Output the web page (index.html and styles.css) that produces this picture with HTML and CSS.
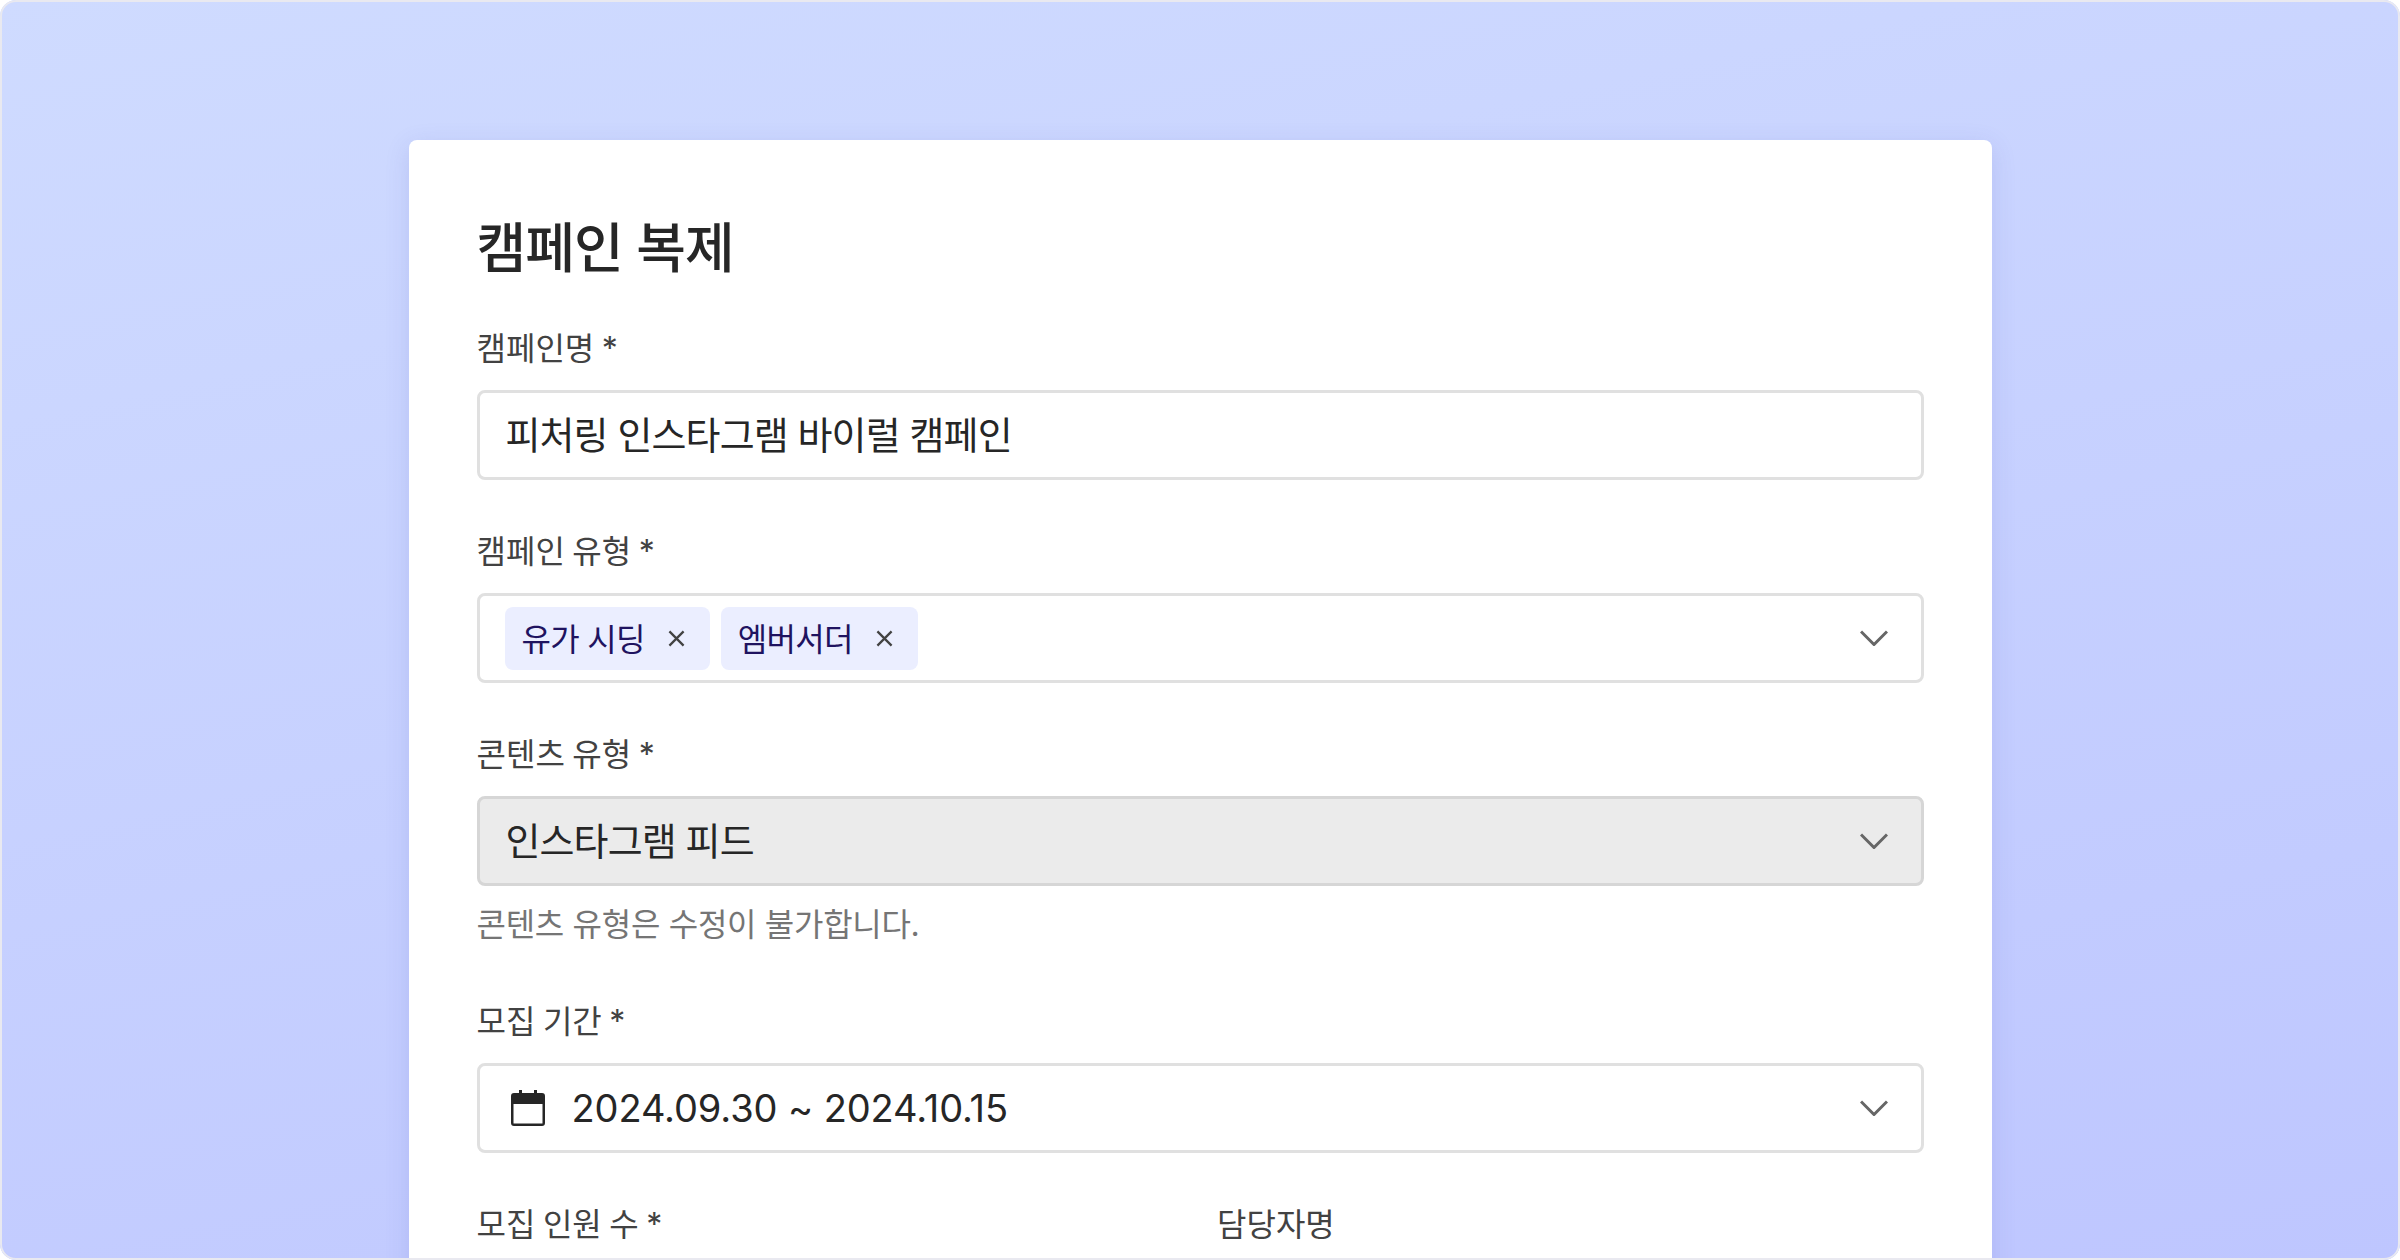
FILE: index.html
```html
<!DOCTYPE html>
<html lang="ko">
<head>
<meta charset="utf-8">
<title>캠페인 복제</title>
<link rel="stylesheet" href="styles.css">
</head>
<body>
<div class="frame">
  <main class="card">
    <h1 class="title">캠페인 복제</h1>
    <div class="field">
      <label class="label">캠페인명 *</label>
      <div class="control"><span class="value">피처링 인스타그램 바이럴 캠페인</span></div>
    </div>
    <div class="field">
      <label class="label">캠페인 유형 *</label>
      <div class="control control-tags">
        <span class="tag"><span class="tag-text">유가 시딩</span><svg class="tag-x" viewBox="0 0 18 18"><path d="M1.5 1.5l15 15M16.5 1.5l-15 15"/></svg></span>
        <span class="tag"><span class="tag-text">엠버서더</span><svg class="tag-x" viewBox="0 0 18 18"><path d="M1.5 1.5l15 15M16.5 1.5l-15 15"/></svg></span>
        <svg class="chev" viewBox="0 0 28 16"><path d="M1 1.5l13 13 13-13"/></svg>
      </div>
    </div>
    <div class="field field-help">
      <label class="label">콘텐츠 유형 *</label>
      <div class="control control-disabled">
        <span class="value">인스타그램 피드</span>
        <svg class="chev" viewBox="0 0 28 16"><path d="M1 1.5l13 13 13-13"/></svg>
      </div>
      <p class="help">콘텐츠 유형은 수정이 불가합니다.</p>
    </div>
    <div class="field">
      <label class="label">모집 기간 *</label>
      <div class="control">
        <svg class="cal" viewBox="0 0 34 36"><path class="cal-fill" d="M8 0h3v3h12V0h3v3h5a3 3 0 0 1 3 3v27a3 3 0 0 1-3 3H3a3 3 0 0 1-3-3V6a3 3 0 0 1 3-3h5zM2.5 14v19.5h29V14z"/></svg>
        <span class="value-date">2024.09.30 ~ 2024.10.15</span>
        <svg class="chev" viewBox="0 0 28 16"><path d="M1 1.5l13 13 13-13"/></svg>
      </div>
    </div>
    <div class="row">
      <div class="field"><label class="label">모집 인원 수 *</label><div class="control"></div></div>
      <div class="field"><label class="label">담당자명</label><div class="control"></div></div>
    </div>
  </main>
</div>
</body>
</html>
```
FILE: styles.css
```css
* { box-sizing: border-box; }
html, body { margin: 0; height: 100%; }
body {
  font-family: "Inter", "Noto Sans CJK KR", sans-serif;
  background: #fff;
}
.frame {
  position: relative;
  height: 1260px;
  overflow: hidden;
  padding-top: 140px;
  background: linear-gradient(168deg, #cfdbff 0%, #bec6ff 100%);
  border-radius: 16px;
}
.frame::after {
  content: "";
  position: absolute;
  inset: 0;
  border: 2px solid #e9e9f0;
  border-radius: 16px;
  pointer-events: none;
}
.card {
  width: 1583px;
  margin: 0 auto;
  padding: 75px 68px 0;
  background: #fff;
  border-radius: 8px;
  box-shadow: 0 6px 24px rgba(80, 90, 180, 0.16);
}
.title {
  margin: 0 0 44px;
  font-size: 54px;
  line-height: 68px;
  font-weight: 500;
  letter-spacing: -0.9px;
  color: #262626;
}
.field { margin-bottom: 50px; }
.field-help { margin-bottom: 55px; }
.label {
  display: block;
  margin-bottom: 19px;
  font-size: 32px;
  line-height: 44px;
  word-spacing: -1.5px;
  color: #424242;
}
.control {
  display: flex;
  align-items: center;
  height: 90px;
  padding: 0 26px;
  border: 3px solid #e0e0e0;
  border-radius: 8px;
  background: #fff;
  font-size: 38px;
  color: #262626;
}
.value { margin-bottom: 6px; letter-spacing: -0.9px; }
.value-date { letter-spacing: -0.1px; }
.control-tags { padding-left: 25px; gap: 11px; }
.control-disabled { background: #ebebeb; border-color: #d6d6d6; }
.tag {
  display: flex;
  align-items: center;
  gap: 23px;
  height: 63px;
  padding: 0 25px 0 17px;
  border-radius: 8px;
  background: #ebeeff;
  color: #1f1360;
  font-size: 32px;
  letter-spacing: -0.7px;
}
.tag-text { margin-bottom: 3px; }
.tag-x { width: 17px; height: 17px; }
.tag-x path { fill: none; stroke: #424242; stroke-width: 2.4; }
.chev { width: 28px; height: 16px; margin-left: auto; margin-right: 7px; }
.chev path { fill: none; stroke: #666; stroke-width: 3; }
.cal { width: 34px; height: 36px; margin-left: 5px; margin-right: 27px; }
.cal-fill { fill: #262626; fill-rule: evenodd; }
.help {
  margin: 19px 0 0;
  font-size: 32px;
  line-height: 40px;
  letter-spacing: -0.3px;
  color: #757575;
}
.row { display: grid; grid-template-columns: 1fr 1fr; gap: 34px; }
```
